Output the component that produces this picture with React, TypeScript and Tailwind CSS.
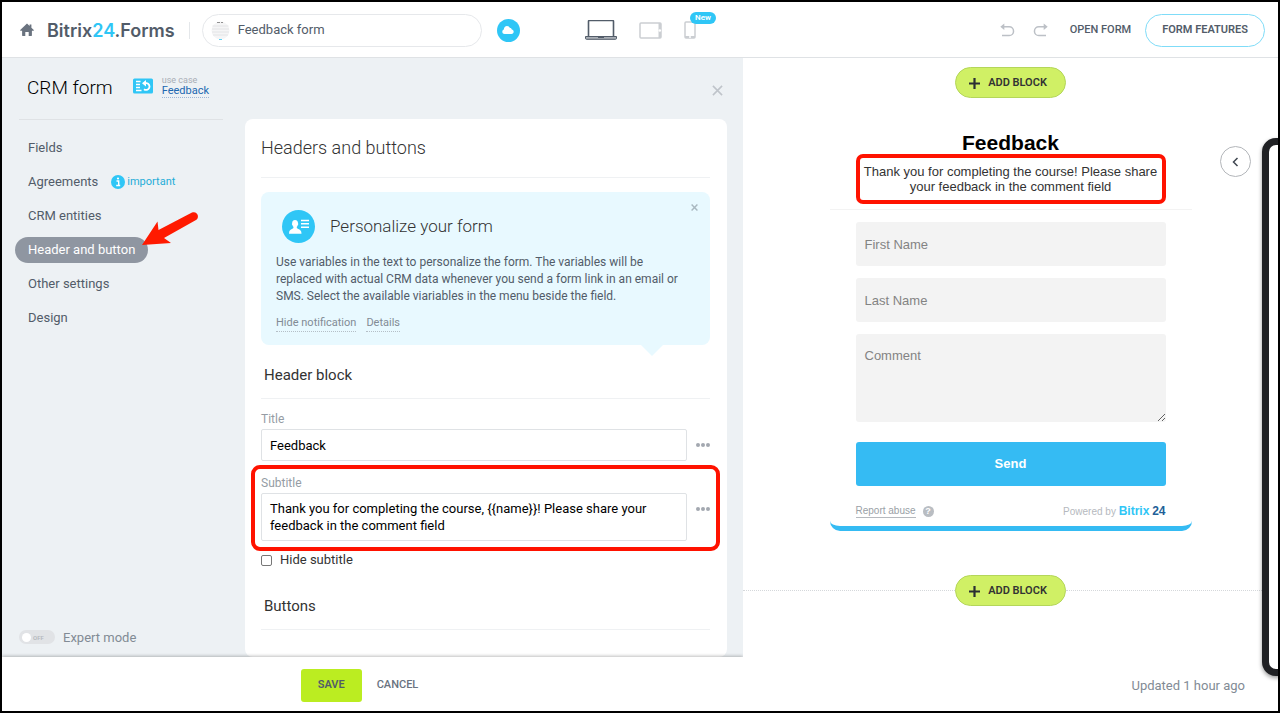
import React from 'react'

const navItems = [
  { key: 'fields', label: 'Fields' },
  { key: 'agreements', label: 'Agreements', important: true },
  { key: 'entities', label: 'CRM entities' },
  { key: 'header', label: 'Header and button', active: true },
  { key: 'other', label: 'Other settings' },
  { key: 'design', label: 'Design' },
]

function HomeIcon() {
  return (
    <svg width="14" height="14" viewBox="0 0 14 14" fill="#6a737f" aria-hidden="true">
      <path d="M7 .6 9.6 3V1.6h1.8v3.1L13.8 7v.8h-1.9v4.7c0 .3-.2.5-.5.5H8.7V9H5.3v4H2.6c-.3 0-.5-.2-.5-.5V7.800H.2V7z" />
    </svg>
  )
}

function CloudIcon() {
  return (
    <svg width="12" height="10" viewBox="0 0 12 10" fill="#fff" aria-hidden="true">
      <path d="M2.700 9C1.300 9 .3 8 .3 6.700c0-1.100.7-1.900 1.600-2.200C1.900 2.500 3.200 1 5 1c1.400 0 2.500.8 3 2 .9-.1 1.700.6 1.800 1.600 1.100.2 1.900 1.100 1.900 2.200C11.700 8 10.800 9 9.500 9z" />
    </svg>
  )
}

function LaptopIcon() {
  return (
    <svg width="32" height="20" viewBox="0 0 32 20" aria-hidden="true">
      <path d="M3.500 16.500V1.500a1 1 0 0 1 1-1h23a1 1 0 0 1 1 1v15" fill="#fff" stroke="#525c69" strokeWidth="1.600" />
      <path d="M.5 16.500h31v1.800a1 1 0 0 1-1 1h-29a1 1 0 0 1-1-1z" fill="#a9aeb5" stroke="#525c69" />
      <path d="M13 16.500h6v1.500h-6z" fill="#525c69" />
    </svg>
  )
}

function TabletIcon() {
  return (
    <svg width="23" height="17" viewBox="0 0 23 17" aria-hidden="true">
      <rect x="1" y="1" width="21" height="15" rx="1" fill="#fff" stroke="#cbced2" strokeWidth="1.500" />
      <path d="M19.500 1H22v15h-2.500z" fill="#cbced2" />
      <circle cx="20.800" cy="8.500" r="1.300" fill="#fff" />
    </svg>
  )
}

function PhoneIcon() {
  return (
    <svg width="12" height="18" viewBox="0 0 12 18" aria-hidden="true">
      <rect x="1" y="1" width="10" height="16" rx="1" fill="#fff" stroke="#cbced2" strokeWidth="1.500" />
      <path d="M1 15h10v2H1z" fill="#cbced2" />
      <circle cx="6" cy="16" r="1" fill="#fff" />
    </svg>
  )
}

function UndoIcon({ flip = false }: { flip?: boolean }) {
  return (
    <svg width="15" height="14" viewBox="0 0 15 14" className={flip ? '-scale-x-100' : ''} aria-hidden="true">
      <path d="M3 3.800h6.200a4.300 4.300 0 0 1 0 8.700H2" fill="none" stroke="#bcc0c6" strokeWidth="1.500" />
      <path d="M.3 3.800 4.300.5v6.600z" fill="#bcc0c6" />
    </svg>
  )
}

function CrossIcon({ size, color, width }: { size: number; color: string; width: number }) {
  return (
    <svg width={size} height={size} viewBox="0 0 12 12" fill="none" stroke={color} strokeWidth={width} aria-hidden="true">
      <path d="m1 1 10 10M11 1 1 11" />
    </svg>
  )
}

function UseCaseIcon() {
  return (
    <svg width="20" height="16" viewBox="0 0 20 16" aria-hidden="true">
      <rect width="20" height="15" y=".5" rx="1.500" fill="#2fc6f6" />
      <path d="M3 3.500h4.500M3 6.500h4M3 9.500h4M3 12.500h5.500" stroke="#fff" strokeWidth="1.300" />
      <path d="M11.500 5.200h2.200a3.400 3.400 0 1 1-2.700 6" fill="none" stroke="#fff" strokeWidth="1.800" />
      <path d="M9 5.200 13 2v6.400z" fill="#fff" />
    </svg>
  )
}

function ContactIcon() {
  return (
    <svg width="33" height="33" viewBox="0 0 33 33" aria-hidden="true">
      <circle cx="16.500" cy="16.500" r="16.500" fill="#2fc6f6" />
      <path
        d="M13 10c2 0 3.100 1.300 3 3.300.5.300.3 1.600-.3 1.900-.2.700-.5 1.200-.9 1.600v1.300c.2.800 4.200 1.500 4.500 3.900l.2 1.800H7l.2-1.800c.3-2.400 4-3.100 4.200-3.900v-1.300c-.4-.4-.7-.9-.9-1.600-.6-.3-.8-1.600-.3-1.900C10 11.300 11 10 13 10z"
        fill="#fff"
      />
      <path d="M19 10.500h8M19 13.800h8M19 17.200h8" stroke="#fff" strokeWidth="1.600" />
    </svg>
  )
}

function AddBlockButton() {
  return (
    <button
      type="button"
      className="flex h-[31px] items-center gap-2 rounded-full border border-[#b4d65a] bg-[#d0f065] pt-px pr-[18px] pl-[13px] text-[11px] font-semibold text-[#333]"
    >
      <svg width="11" height="11" viewBox="0 0 11 11" stroke="#2b2f33" strokeWidth="2.200" aria-hidden="true">
        <path d="M5.500 0v11M0 5.500h11" />
      </svg>
      ADD BLOCK
    </button>
  )
}

function MoreButton({ label }: { label: string }) {
  return (
    <button type="button" aria-label={label} className="flex w-[14px] shrink-0 justify-between">
      <span className="size-[4px] rounded-full bg-[#a3a8b0]" />
      <span className="size-[4px] rounded-full bg-[#a3a8b0]" />
      <span className="size-[4px] rounded-full bg-[#a3a8b0]" />
    </button>
  )
}

function TopBar() {
  return (
    <header className="flex h-14 shrink-0 items-center border-b border-[#dfe2e5] bg-white pt-px pr-[13px] pl-[18px] text-[#525c69]">
      <div className="flex flex-1 items-center">
        <a href="#" aria-label="Home">
          <HomeIcon />
        </a>
        <span className="ml-[13px] font-[Inter,sans-serif] text-[18px] font-semibold whitespace-nowrap">
          Bitrix<span className="text-[#2fc6f6]">24</span>.Forms
        </span>
        <span className="ml-[14px] h-[17px] w-px bg-[#e4e7ea]" />
        <label className="ml-3 flex h-[33px] w-[280px] items-center gap-2 rounded-full border border-[#e6e8eb] pr-4 pl-2">
          {/* 表单缩略图 */}
          <svg width="19" height="19" viewBox="0 0 19 19" aria-hidden="true">
            <circle cx="9.500" cy="9.500" r="9" fill="#f5f5f6" />
            <path d="M6 1.500h3M10 1.500h2" stroke="#777" strokeWidth=".8" />
            <path d="M1.500 5h16M1 8h17M1 11h17M2 14h15" stroke="#e3e4e6" />
            <path d="M8 18.500h3" stroke="#5fd0f5" />
          </svg>
          <input
            type="text"
            aria-label="Form name"
            defaultValue="Feedback form"
            className="min-w-0 flex-1 bg-transparent text-[13px] outline-none"
          />
        </label>
        <button type="button" aria-label="Cloud" className="ml-[15px] flex size-[23px] items-center justify-center rounded-full bg-[#2fc6f6]">
          <CloudIcon />
        </button>
      </div>

      <div className="flex items-center gap-[22px] pr-1">
        <button type="button" aria-label="Desktop">
          <LaptopIcon />
        </button>
        <button type="button" aria-label="Tablet">
          <TabletIcon />
        </button>
        <button type="button" aria-label="Phone" className="relative">
          <PhoneIcon />
          <span className="absolute -top-[9px] left-[6px] rounded-full bg-[#2fc6f6] px-[5px] text-[8px] leading-3 font-semibold text-white">New</span>
        </button>
      </div>

      <div className="flex flex-1 items-center justify-end text-[11px] font-semibold">
        <button type="button" aria-label="Undo">
          <UndoIcon />
        </button>
        <button type="button" aria-label="Redo" className="ml-[18px]">
          <UndoIcon flip />
        </button>
        <a href="#" className="ml-[22px] font-medium whitespace-nowrap">
          OPEN FORM
        </a>
        <button type="button" className="ml-[14px] h-[33px] rounded-full border border-[#7fdcf8] px-4 whitespace-nowrap">
          FORM FEATURES
        </button>
      </div>
    </header>
  )
}

function Sidebar() {
  return (
    <nav className="relative flex w-[243px] shrink-0 flex-col">
      <div className="mr-[22px] ml-[17px] border-t border-[#dfe2e5]" />
      <ul className="mt-[15px] flex flex-1 flex-col gap-2 pl-[13px] text-[13px] text-[#525c69]">
        {navItems.map((item) => (
          <li key={item.key} className="flex h-[26px] items-center">
            <a
              href="#"
              className={
                item.active
                  ? 'flex h-[26px] items-center rounded-full bg-[#8f96a1] px-[13px] text-white'
                  : 'flex h-[26px] items-center px-[13px]'
              }
            >
              {item.label}
            </a>
            {item.important && (
              <a href="#" className="flex items-center gap-[2px] text-[11px] text-[#1fadd8]">
                <svg width="14" height="14" viewBox="0 0 14 14" aria-hidden="true">
                  <circle cx="7" cy="7" r="7" fill="#2fc6f6" />
                  <path d="M5.500 6h2.200v4.500M5.200 10.500h4" fill="none" stroke="#fff" strokeWidth="1.400" />
                  <circle cx="7" cy="3.500" r="1.100" fill="#fff" />
                </svg>
                important
              </a>
            )}
          </li>
        ))}
      </ul>
      <label className="mb-[10px] ml-[17px] flex items-center gap-2 text-[13px] text-[#828b95]">
        <input type="checkbox" className="peer sr-only" />
        <span className="flex h-[14px] w-9 items-center gap-[2px] rounded-full bg-[#e1e3e6] pl-[3px] text-[6px] font-semibold text-[#b4b8bd]">
          <span className="size-[9px] rounded-full bg-white" />
          OFF
        </span>
        Expert mode
      </label>

      {/* 指向当前菜单项的箭头 */}
      <svg className="absolute top-[91px] left-[139px]" width="60" height="40" viewBox="0 0 60 40" fill="#ff1a00" aria-hidden="true">
        <path d="M1 35 16.500 11.500 17.500 20 51 2.500c5.500-2 8 5 4 7.500L23 28l7 5z" />
      </svg>
    </nav>
  )
}

function SettingsCard() {
  return (
    <section className="min-w-0 flex-1 rounded-[8px] bg-white pr-[17px] pb-[26px] pl-4 text-[#333]">
      <h2 className="border-b border-[#eff1f3] py-[18px] text-[18px] leading-[22px] font-light">Headers and buttons</h2>

      <div className="relative mt-[14px] rounded-[8px] bg-[#e8f9ff] pt-[18px] pr-3 pb-[13px] pl-[15px]">
        <button type="button" aria-label="Close notification" className="absolute top-3 right-3">
          <CrossIcon size={7} color="#a9b8c0" width={2.5} />
        </button>
        <div className="flex items-center gap-[15px] pl-[6px]">
          <ContactIcon />
          <h3 className="text-[17px] font-light">Personalize your form</h3>
        </div>
        <p className="mt-[11px] text-[12px] leading-[17px] text-[#525c69]">
          Use variables in the text to personalize the form. The variables will be
          <br />
          replaced with actual CRM data whenever you send a form link in an email or
          <br />
          SMS. Select the available viariables in the menu beside the field.
        </p>
        <div className="mt-[10px] flex gap-[10px] text-[11px] leading-[16px] text-[#828b95]">
          <a href="#" className="border-b border-dotted border-[#b5bfc7]">
            Hide notification
          </a>
          <a href="#" className="border-b border-dotted border-[#b5bfc7]">
            Details
          </a>
        </div>
        <span className="absolute right-[46px] -bottom-[11px] h-3 w-6 bg-[#e8f9ff] [clip-path:polygon(0_0,100%_0,50%_100%)]" />
      </div>

      <h3 className="mt-[19px] border-b border-[#eff1f3] pb-3 pl-[3px] text-[15px] leading-[22px]">Header block</h3>

      <label htmlFor="title" className="mt-3 block text-[12px] leading-[16px] text-[#959ca4]">
        Title
      </label>
      <div className="mt-[2px] flex items-center gap-[9px]">
        <input
          id="title"
          type="text"
          defaultValue="Feedback"
          className="h-[32px] min-w-0 flex-1 rounded-[2px] border border-[#dfe2e5] px-2 text-[13px] text-black outline-none"
        />
        <MoreButton label="Title variables" />
      </div>

      <div className="relative mt-[14px]">
        <label htmlFor="subtitle" className="block text-[12px] leading-[16px] text-[#959ca4]">
          Subtitle
        </label>
        <div className="mt-[2px] flex gap-[9px]">
          <textarea
            id="subtitle"
            rows={2}
            defaultValue="Thank you for completing the course, {{name}}! Please share your feedback in the comment field"
            className="h-[48px] min-w-0 flex-1 resize-none overflow-hidden rounded-[2px] border border-[#dfe2e5] px-2 py-[6px] text-[13px] leading-[17px] text-black outline-none"
          />
          <div className="flex h-[32px] items-center">
            <MoreButton label="Subtitle variables" />
          </div>
        </div>
        <div className="pointer-events-none absolute -inset-x-[10px] -top-[10px] -bottom-[10px] rounded-[9px] border-4 border-[#ff1200]" />
      </div>

      <label className="mt-[9px] flex items-center gap-2 text-[13px] leading-[20px]">
        <input type="checkbox" className="size-[11px] appearance-none rounded-[2px] border border-[#777]" />
        Hide subtitle
      </label>

      <h3 className="mt-[25px] border-b border-[#eff1f3] pb-[12px] pl-[3px] text-[15px] leading-[22px]">Buttons</h3>
    </section>
  )
}

function SettingsPanel() {
  return (
    <div className="flex w-[741px] shrink-0 flex-col bg-[#edf1f4]">
      <div className="flex h-[61px] shrink-0 items-center pr-5 pl-[25px]">
        <h1 className="text-[19px] font-light whitespace-nowrap text-black">CRM form</h1>
        <div className="ml-5 flex items-center gap-[9px] pb-[5px]">
          <UseCaseIcon />
          <div className="flex flex-col items-start">
            <span className="text-[9px] leading-[10px] text-[#a8adb4]">use case</span>
            <a href="#" className="border-b border-dotted border-[#9db6d6] text-[11px] leading-[12px] text-[#2067b0]">
              Feedback
            </a>
          </div>
        </div>
        <button type="button" aria-label="Close panel" className="ml-auto pt-1">
          <CrossIcon size={11} color="#bfc4ca" width={1.7} />
        </button>
      </div>

      <div className="flex flex-1 pr-4">
        <Sidebar />
        <SettingsCard />
      </div>

      <div className="relative flex h-[54px] shrink-0 items-center justify-center gap-[15px] bg-white pt-[2px] pr-[26px] text-[11px] font-semibold shadow-[0_-1px_3px_rgba(0,0,0,0.25)]">
        <button type="button" className="h-[33px] rounded-[3px] bg-[#bbed21] px-[17px] text-[#525c69]">
          SAVE
        </button>
        <button type="button" className="font-medium text-[#6a737f]">
          CANCEL
        </button>
      </div>
    </div>
  )
}

function Preview() {
  return (
    <main className="relative flex min-w-0 flex-1 flex-col overflow-hidden bg-white">
      <div className="mt-[9px] flex justify-center">
        <AddBlockButton />
      </div>

      <form
        className="mx-auto mt-[33px] w-[362px] rounded-b-[10px] border-b-[5px] border-[#35bbf3] px-[26px] pb-2 font-['Liberation_Sans',Arial,sans-serif]"
        onSubmit={(e) => e.preventDefault()}
      >
        <h2 className="text-center text-[21px] leading-[24px] font-bold text-black">Feedback</h2>
        <div className="relative py-[9px]">
          <p className="text-center text-[13px] leading-[15px] text-[#333]">
            Thank you for completing the course! Please share
            <br />
            your feedback in the comment field
          </p>
          <div className="pointer-events-none absolute inset-x-0 -inset-y-px rounded-[7px] border-4 border-[#ff1200]" />
        </div>
        <div className="-mx-[26px] mt-[6px] border-t border-[#f3f3f3]" />

        <div className="mt-3 flex flex-col gap-[12px] text-[13px]">
          <input
            type="text"
            aria-label="First Name"
            placeholder="First Name"
            className="h-[44px] rounded-[3px] bg-[#f3f3f3] px-[9px] outline-none placeholder:text-[#838383]"
          />
          <input
            type="text"
            aria-label="Last Name"
            placeholder="Last Name"
            className="h-[44px] rounded-[3px] bg-[#f3f3f3] px-[9px] outline-none placeholder:text-[#838383]"
          />
          <textarea
            aria-label="Comment"
            placeholder="Comment"
            className="h-[88px] resize-y rounded-[3px] bg-[#f3f3f3] px-[9px] py-3 outline-none placeholder:text-[#838383]"
          />
        </div>
        <button type="submit" className="mt-5 h-[44px] w-full rounded-[3px] bg-[#35bbf3] text-[13px] font-bold text-white">
          Send
        </button>

        <div className="mt-[18px] flex items-center text-[10px] leading-[13px] text-[#9a9fa6]">
          <a href="#" className="border-b border-[#b5b9be]">
            Report abuse
          </a>
          <span className="ml-[7px] flex size-[11px] items-center justify-center rounded-full bg-[#b9bdc2] text-[9px] font-bold text-white">?</span>
          <span className="ml-auto text-[#b5b9be]">
            Powered by <b className="text-[12px] text-[#2fc6f6]">Bitrix</b> <b className="text-[12px] text-[#215f98]">24</b>
          </span>
        </div>
      </form>

      <div className="mt-[44px] flex items-center">
        <span className="flex-1 border-t border-dotted border-[#d5d8db]" />
        <AddBlockButton />
        <span className="flex-1 border-t border-dotted border-[#d5d8db]" />
      </div>

      <p className="mt-auto mr-[33px] mb-[15px] text-right text-[13px] leading-[20px] text-[#828b95]">Updated 1 hour ago</p>

      <button
        type="button"
        aria-label="Collapse preview"
        className="absolute top-[88px] right-[27px] flex size-[31px] items-center justify-center rounded-full border border-[#b3b6ba] bg-white"
      >
        <svg width="7" height="10" viewBox="0 0 7 10" fill="none" stroke="#3f4650" strokeWidth="1.500" aria-hidden="true">
          <path d="M5.500 1 1.500 5l4 4" />
        </svg>
      </button>

      {/* 手机预览框，右侧超出屏幕 */}
      <div className="absolute top-[80px] -right-[40px] bottom-[35px] w-[56px] rounded-[14px] border-[7px] border-[#202124] bg-white shadow-[0_2px_4px_rgba(0,0,0,0.4)]" />
    </main>
  )
}

export default function App() {
  return (
    <div className="flex min-h-screen flex-col border-2 border-black bg-white font-[Roboto,sans-serif]">
      <TopBar />
      <div className="flex flex-1">
        <SettingsPanel />
        <Preview />
      </div>
    </div>
  )
}
